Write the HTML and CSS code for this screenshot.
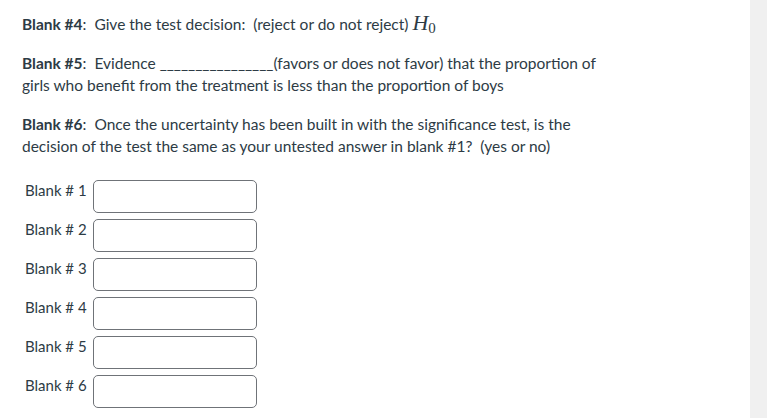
FILE: index.html
```html
<!DOCTYPE html>
<html>
<head>
<meta charset="utf-8">
<link rel="stylesheet" href="styles.css">
</head>
<body>
<div class="page">
  <main class="content">
    <p class="q q1"><strong>Blank #4</strong>:&nbsp; Give the test decision:&nbsp; (reject or do not reject) <span class="math"><i>H</i><sub>0</sub></span></p>
    <p class="q"><strong>Blank #5</strong>:&nbsp; Evidence ________________(favors or does not favor) that the proportion of girls who benefit from the treatment is less than the proportion of boys</p>
    <p class="q"><strong>Blank #6</strong>:&nbsp; Once the uncertainty has been built in with the significance test, is the decision of the test the same as your untested answer in blank #1?&nbsp; (yes or no)</p>
    <div class="blanks">
      <div class="row"><label class="lbl">Blank # 1</label><input class="inp" type="text"></div>
      <div class="row"><label class="lbl">Blank # 2</label><input class="inp" type="text"></div>
      <div class="row"><label class="lbl">Blank # 3</label><input class="inp" type="text"></div>
      <div class="row"><label class="lbl">Blank # 4</label><input class="inp" type="text"></div>
      <div class="row"><label class="lbl">Blank # 5</label><input class="inp" type="text"></div>
      <div class="row"><label class="lbl">Blank # 6</label><input class="inp" type="text"></div>
    </div>
  </main>
  <aside class="side"></aside>
</div>
</body>
</html>
```
FILE: styles.css
```css
html, body { margin: 0; padding: 0; background: #fff; }
body { font-family: Lato, "Open Sans", sans-serif; color: #2d3b45; font-size: 15.5px; }
.page { display: flex; height: 418px; overflow: hidden; }
.content { flex: 1; padding: 13px 0 0 22px; }
.side { width: 17px; background: #f0f0f0; }
.q { margin: 0 0 16px; line-height: 22.5px; max-width: 600px; }
.q strong { font-weight: 700; }
.math { font-family: "Liberation Serif", "Times New Roman", serif; font-size: 22px; line-height: 0; }
.math sub { font-size: 15px; vertical-align: -3px; line-height: 0; }
.blanks { display: flex; flex-direction: column; gap: 6px; padding-top: 6px; }
.row { display: flex; align-items: flex-start; }
.lbl { width: 71px; padding-left: 3px; box-sizing: border-box; padding-top: 0; line-height: 20px; font-size: 15px; }
.inp { width: 164px; height: 33px; box-sizing: border-box; border: 1px solid #6f7378; border-radius: 5px; margin: 0; padding: 0 6px; background: #fff; }
```
